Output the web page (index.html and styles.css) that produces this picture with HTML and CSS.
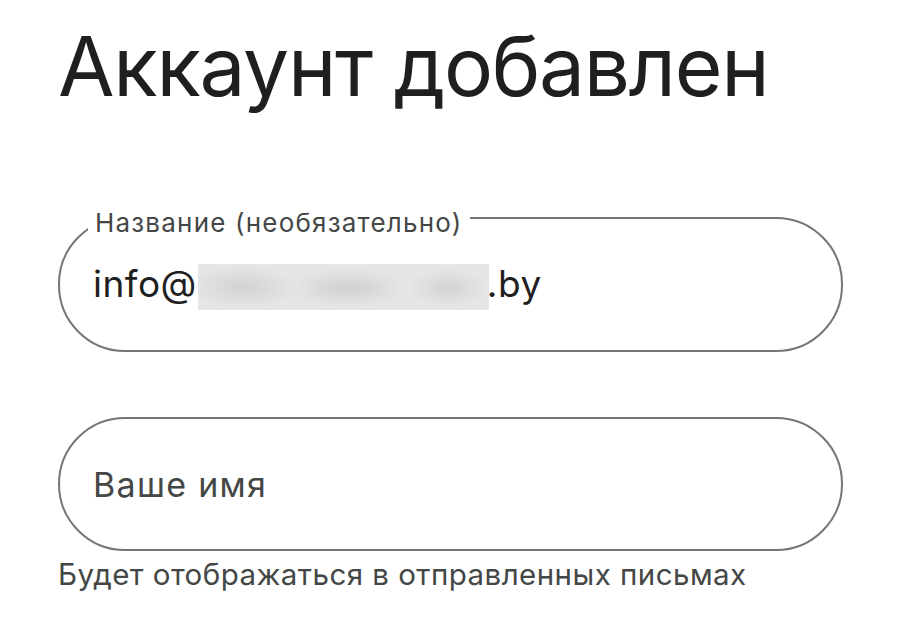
FILE: index.html
```html
<!DOCTYPE html>
<html lang="ru">
<head>
<meta charset="utf-8">
<link rel="stylesheet" href="styles.css">
</head>
<body>
<main class="page">
  <h1 class="title">Аккаунт добавлен</h1>
  <div class="field field-filled">
    <label class="field-label">Название (необязательно)</label>
    <div class="field-value">info@<span class="blur"></span>.by</div>
  </div>
  <div class="field field-empty">
    <span class="placeholder">Ваше имя</span>
  </div>
  <p class="helper">Будет отображаться в отправленных письмах</p>
</main>
</body>
</html>
```
FILE: styles.css
```css
* { box-sizing: border-box; }
html, body { margin: 0; padding: 0; background: #fff; }
body { width: 900px; height: 633px; overflow: hidden; }
.page {
  padding: 17px 57px 0 58px;
  display: flex;
  flex-direction: column;
}
.title {
  margin: 0;
  font-family: Inter, sans-serif;
  font-weight: 400;
  font-size: 82px;
  line-height: 100px;
  color: #1f1f1f;
  letter-spacing: -1.3px;
}
.field {
  width: 785px;
  border: 2px solid #747775;
  border-radius: 67px;
}
.field-filled {
  position: relative;
  margin-top: 100px;
  height: 135px;
  padding: 42px 0 0 33px;
}
.field-label {
  position: absolute;
  left: 28px;
  top: -9.5px;
  padding: 0 8px 0 7px;
  background: #fff;
  font-family: Inter, sans-serif;
  font-size: 26px;
  line-height: 26px;
  letter-spacing: 1.2px;
  color: #444746;
  white-space: nowrap;
}
.field-value {
  display: flex;
  align-items: flex-start;
  font-family: Inter, sans-serif;
  font-size: 37px;
  line-height: 46px;
  height: 46px;
  letter-spacing: 0.5px;
  color: #1f1f1f;
}
.field-value .blur + * { letter-spacing: 0; }
.blur {
  width: 291px;
  height: 46px;
  margin-top: 3px;
  margin-left: 1px;
  margin-right: -2px;
  background-color: #e6e6e6;
  background-image:
    radial-gradient(ellipse 55px 22px at 45px 23px, #d2d2d2, rgba(230,230,230,0)),
    radial-gradient(ellipse 60px 20px at 150px 24px, #d0d0d0, rgba(230,230,230,0)),
    radial-gradient(ellipse 40px 20px at 250px 24px, #d4d4d4, rgba(230,230,230,0));
}
.field-empty {
  margin-top: 65px;
  height: 134px;
  display: flex;
  align-items: center;
  padding-left: 33px;
}
.placeholder {
  font-family: Inter, sans-serif;
  font-size: 34px;
  letter-spacing: 1.3px;
  color: #444746;
}
.helper {
  margin: 5px 0 0 0;
  font-family: Inter, sans-serif;
  font-size: 29.5px;
  letter-spacing: 0.45px;
  color: #444746;
}
```
